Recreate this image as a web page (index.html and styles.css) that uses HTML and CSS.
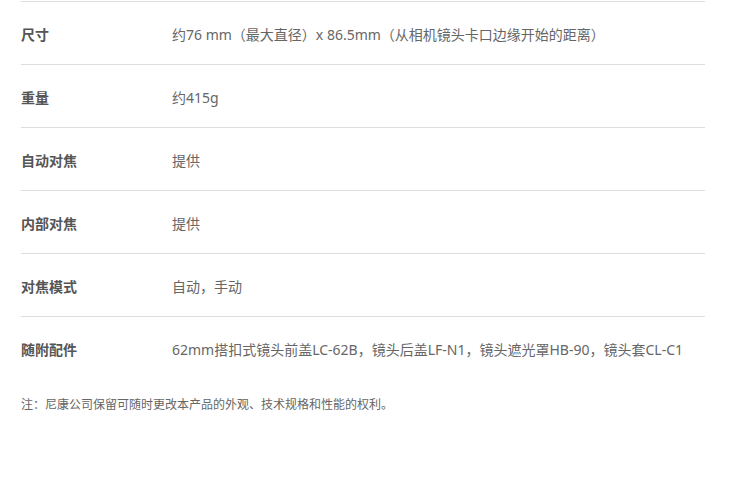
FILE: index.html
```html
<!DOCTYPE html>
<html lang="zh-CN">
<head>
    <meta charset="UTF-8">
    <meta name="viewport" content="width=device-width, initial-scale=1.0">
    <title>规格</title>
    <link rel="stylesheet" href="styles.css">
</head>
<body>
    <div class="specs">
        <div class="spec-row">
            <div class="spec-label">尺寸</div>
            <div class="spec-value">约76 mm（最大直径）x 86.5mm（从相机镜头卡口边缘开始的距离）</div>
        </div>
        <div class="spec-row">
            <div class="spec-label">重量</div>
            <div class="spec-value">约415g</div>
        </div>
        <div class="spec-row">
            <div class="spec-label">自动对焦</div>
            <div class="spec-value">提供</div>
        </div>
        <div class="spec-row">
            <div class="spec-label">内部对焦</div>
            <div class="spec-value">提供</div>
        </div>
        <div class="spec-row">
            <div class="spec-label">对焦模式</div>
            <div class="spec-value">自动，手动</div>
        </div>
        <div class="spec-row">
            <div class="spec-label">随附配件</div>
            <div class="spec-value">62mm搭扣式镜头前盖LC-62B，镜头后盖LF-N1，镜头遮光罩HB-90，镜头套CL-C1</div>
        </div>
    </div>
    <p class="note">注：尼康公司保留可随时更改本产品的外观、技术规格和性能的权利。</p>
</body>
</html>
```

FILE: styles.css
```css
body {
    margin: 0;
    padding: 1px 0 0 21px;
    font-family: "Noto Sans", "Noto Sans CJK SC", sans-serif;
    background: #fff;
    color: #666;
}

.specs {
    width: 684px;
}

.spec-row {
    display: flex;
    border-top: 1px solid #ddd;
    padding: 23px 0 19px;
    font-size: 14px;
    line-height: 20px;
}

.spec-label {
    width: 151px;
    flex-shrink: 0;
    font-weight: bold;
    color: #555;
}

.spec-value {
    color: #666;
}

.note {
    margin: 17px 0 0;
    font-size: 12px;
    line-height: 18px;
    color: #666;
}
```
